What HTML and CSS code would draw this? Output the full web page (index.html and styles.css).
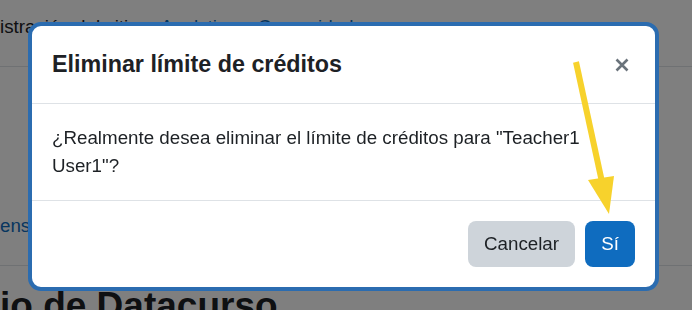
FILE: index.html
```html
<!DOCTYPE html>
<html lang="es">
<head>
<meta charset="utf-8">
<title>Eliminar límite de créditos</title>
<link rel="stylesheet" href="styles.css">
</head>
<body>
<div class="page">
  <nav class="topnav">
    <span class="nav-item current">istración del sitio</span>
    <span class="nav-item link">Analytics</span>
    <span class="nav-item link">Comunidad</span>
  </nav>
  <div class="row">
    <span class="link">ensiones</span>
  </div>
  <h1 class="page-title">io de Datacurso</h1>
</div>

<div class="backdrop"></div>

<div class="modal" role="dialog">
  <div class="modal-header">
    <h5 class="modal-title">Eliminar límite de créditos</h5>
    <button class="close" aria-label="Cerrar">
      <svg width="14" height="14" viewBox="0 0 14 14"><path d="M1.5 1.5 L12.5 12.5 M12.5 1.5 L1.5 12.5" stroke="#6a737b" stroke-width="2.6" stroke-linecap="butt"/></svg>
    </button>
  </div>
  <div class="modal-body">¿Realmente desea eliminar el límite de créditos para "Teacher1 User1"?</div>
  <div class="modal-footer">
    <button class="btn btn-secondary">Cancelar</button>
    <button class="btn btn-primary">Sí</button>
  </div>
</div>

<svg class="annotation" width="692" height="310" viewBox="0 0 692 310">
  <line x1="576" y1="62" x2="602" y2="182" stroke="#f7d22c" stroke-width="6"/>
  <polygon points="588,180 614,176 609,214" fill="#f7d22c"/>
</svg>
</body>
</html>
```

FILE: styles.css
```css
* { box-sizing: border-box; }
html, body { margin: 0; padding: 0; }
body {
  background: #ffffff;
  font-family: "Liberation Sans", Arial, sans-serif;
  color: #1d2125;
  width: 692px;
  height: 310px;
  overflow: hidden;
}
.page { width: 692px; }
.topnav {
  display: flex;
  gap: 22px;
  height: 67px;
  padding-top: 16px;
  border-bottom: 1px solid #dee2e6;
  font-size: 18.75px;
}
.nav-item.current { color: #1d2125; }
.link { color: #0f6cbf; }
.row {
  height: 199px;
  display: flex;
  align-items: center;
  padding-top: 119px;
  font-size: 18.75px;
  border-bottom: 1px solid #dee2e6;
}
.page-title {
  margin: 0;
  padding-top: 19px;
  font-size: 37px;
  font-weight: bold;
  color: #1d2125;
}
.backdrop {
  position: fixed;
  inset: 0;
  background: rgba(0, 0, 0, 0.5);
}
.modal {
  position: fixed;
  top: 22px;
  left: 28px;
  width: 631px;
  background: #fff;
  border: 4px solid #2b6cb0;
  border-radius: 13px;
  display: flex;
  flex-direction: column;
}
.modal-header {
  height: 78px;
  display: flex;
  align-items: center;
  justify-content: space-between;
  padding: 0 20px;
  border-bottom: 1px solid #dee2e6;
}
.modal-title {
  margin: 0;
  font-size: 23.3px;
  font-weight: bold;
  color: #1d2125;
  line-height: 1.2;
}
.close {
  background: none;
  border: 0;
  padding: 0;
  margin-right: 6px;
  width: 14px;
  height: 14px;
  display: flex;
}
.modal-body {
  padding: 20px;
  font-size: 18.75px;
  line-height: 28px;
  color: #1d2125;
  height: 97px;
  border-bottom: 1px solid #dee2e6;
}
.modal-footer {
  display: flex;
  justify-content: flex-end;
  gap: 10px;
  padding: 20px;
}
.btn {
  font-family: "Liberation Sans", Arial, sans-serif;
  font-size: 18.75px;
  height: 46px;
  border: 0;
  border-radius: 8px;
  padding: 0 16px;
}
.btn-secondary { background: #ced4da; color: #1d2125; width: 107px; }
.btn-primary { background: #0f6cbf; color: #fff; width: 50px; }
.annotation {
  position: fixed;
  top: 0;
  left: 0;
}
```
